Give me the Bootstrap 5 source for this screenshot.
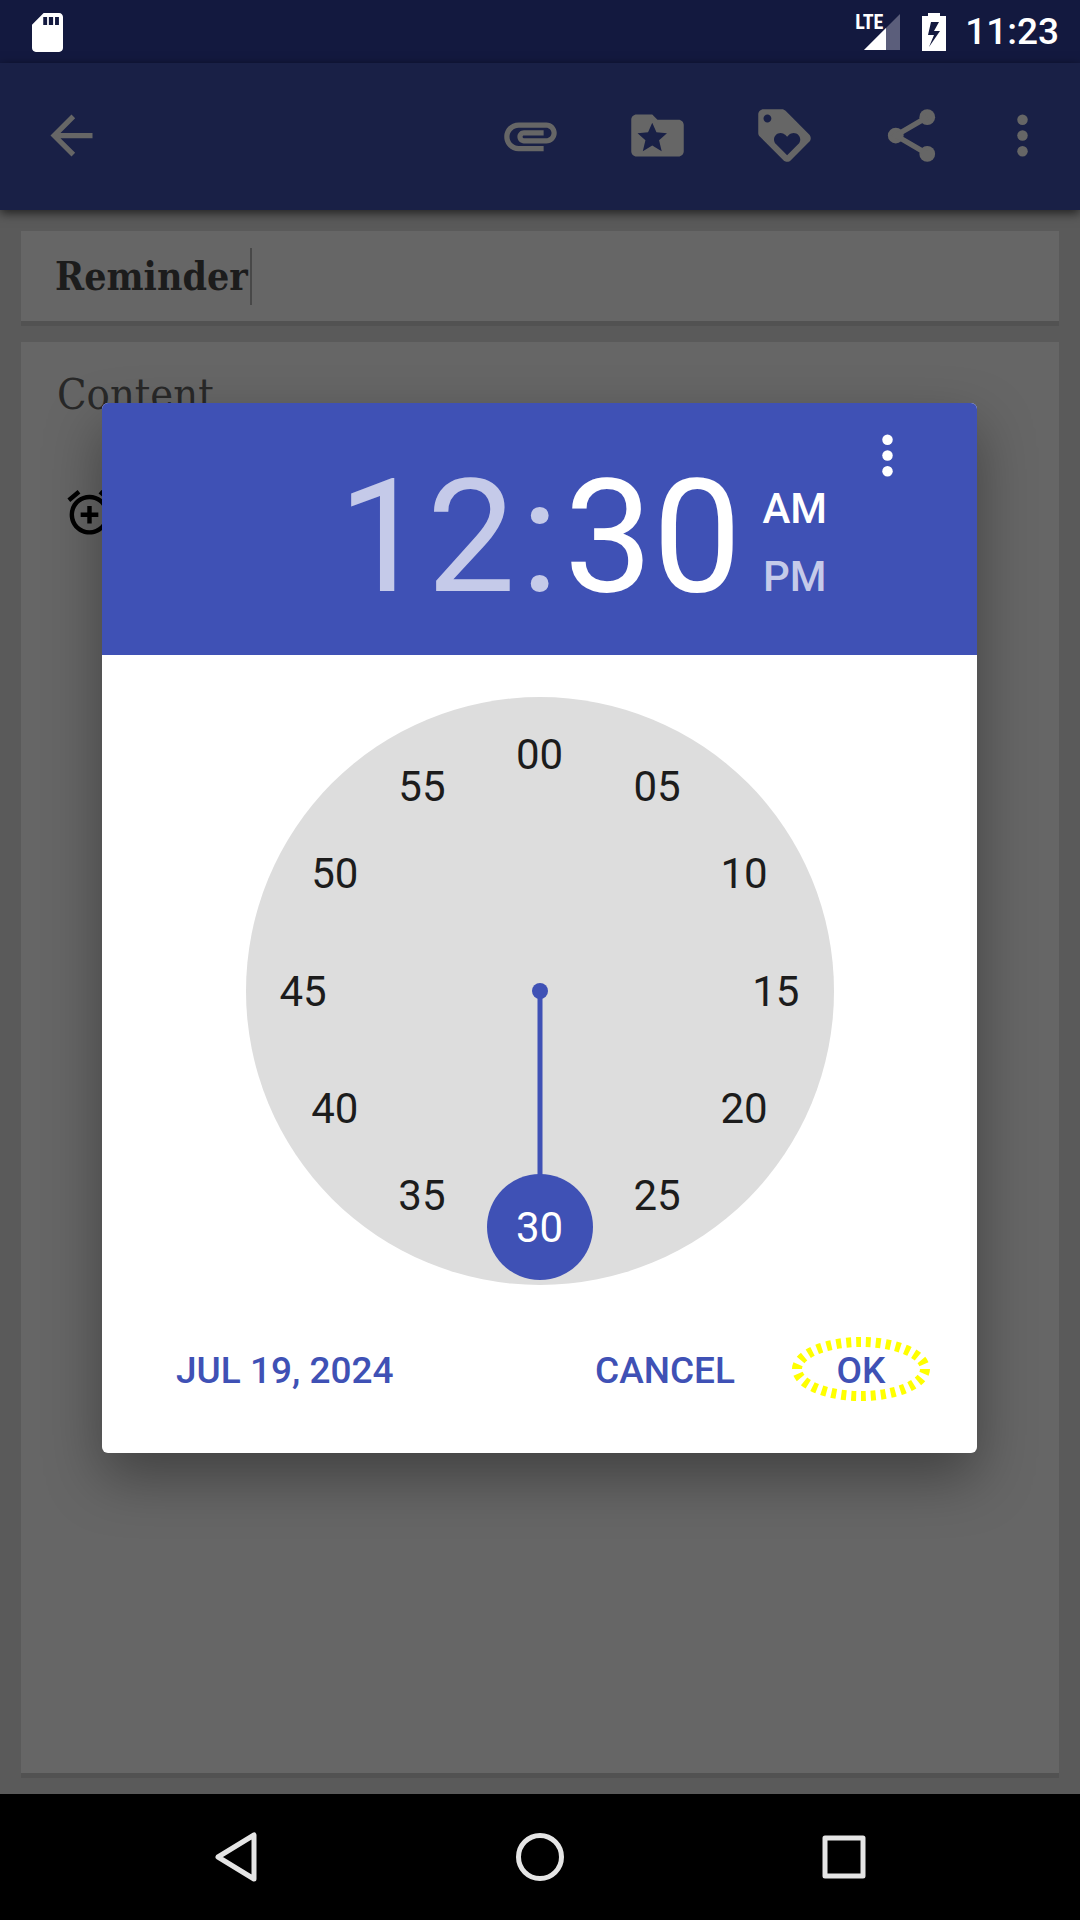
<!DOCTYPE html>
<html lang="en">
<head>
<meta charset="utf-8">
<meta name="viewport" content="width=device-width, initial-scale=1">
<title>Reminder</title>
<link href="https://cdn.jsdelivr.net/npm/bootstrap@5.3.0/dist/css/bootstrap.min.css" rel="stylesheet">
<style>
  body { font-family: Roboto, "Noto Sans", sans-serif; background: #5a5a5a; }
  svg { display: block; }
  .icon-btn { border: 0; background: none; padding: 0; color: inherit; font-weight: inherit; }
  .statusbar { height: 63px; background: #13193f; color: #fff; padding: 1px 21px 0 32px; font-size: 37px; font-weight: 500; line-height: 62px; }
  .network { width: 45px; height: 38px; margin-right: 22px; }
  .network-label { left: 0; top: 0; font: bold 20px/18px "Roboto Condensed", "Liberation Sans Narrow", Roboto, sans-serif; }
  .battery { margin-right: 19px; }
  .appbar { height: 147px; background: #192046; color: #666; padding: 0 26px 2px 40px; box-shadow: 0 3px 10px rgba(0,0,0,.65); z-index: 1; }
  .appbar-actions { gap: 64px; }
  .appbar-more { margin-left: -16px; }
  .editor { padding: 21px 21px 16px; gap: 16px; }
  .sheet { background: #666; border-bottom: 5px solid #525252; font-family: "Roboto Slab", "DejaVu Serif Condensed", "DejaVu Serif", serif; }
  .title-sheet { height: 95px; padding: 0 34px; }
  .title-sheet input, .content-sheet textarea { border: 0; padding: 0; background: none; outline: 0; resize: none; }
  .title-sheet input { width: 195px; font-size: 39px; font-weight: 700; color: #1c1c1c; }
  .caret { width: 2px; height: 57px; background: #484848; }
  .content-sheet { padding: 22px 36px; }
  .content-sheet textarea { height: 60px; line-height: 60px; font-size: 43px; color: #282828; }
  .content-sheet textarea::placeholder { color: #282828; opacity: 1; }
  .alarm-btn { margin: 62px 0 0 6px; color: #000; }
  .picker-layer { z-index: 2; padding: 0 1px 1px 0; }
  .picker { width: 875px; max-width: 82%; border-radius: 6px; background: #fff; box-shadow: 0 24px 56px rgba(0,0,0,.36); color: #3f51b5; }
  .picker-head { height: 252px; background: #3f51b5; color: #c5cae9; border-radius: 6px 6px 0 0; padding: 15px 0 0 236px; }
  .picker-head .active { color: #fff; }
  .clock-text { font-size: 158px; line-height: 188px; }
  .clock-text span { padding: 0 5px; }
  .ampm { font-size: 42px; line-height: 68px; font-weight: 500; margin-left: 21px; padding-top: 12px; }
  .picker-more { top: 21px; right: 58px; color: #fff; }
  .dial { width: 588px; height: 588px; margin: 42px auto 0; background: #ddd; border-radius: 50%; color: #1c1c1c; font-size: 42px; }
  .dial .minute { width: 106px; height: 106px; border-radius: 50%; }
  .dial .minute.active { background: #3f51b5; color: #fff; }
  .hand { width: 5px; height: 236px; background: #3f51b5; }
  .hub { width: 16px; height: 16px; background: #3f51b5; }
  .picker-foot { padding: 37px 32px 37px 53px; gap: 21px; font-size: 37px; font-weight: 500; }
  .picker-foot button { height: 94px; padding: 3px 21px 0; }
  .picker-foot .ok-btn { width: 168px; }
  .navbuttons { height: 126px; background: #000; color: #e5e5e5; gap: 256px; }
</style>
</head>
<body>
<div class="d-flex flex-column min-vh-100">
  <header class="statusbar d-flex align-items-center">
    <svg width="31" height="39" viewBox="4 2 16 20" preserveAspectRatio="none" fill="#fff" aria-hidden="true"><path fill-rule="evenodd" d="M18 2h-8L4 8v12c0 1.100.9 2 2 2h12c1.100 0 2-.9 2-2V4c0-1.100-.9-2-2-2zM9.800 4h2v4.200h-2zM12.700 4h2.200v4.200h-2.200zM15.900 4h2v4.200h-2z"/></svg>
    <div class="network position-relative ms-auto">
      <svg width="45" height="38" viewBox="0 0 45 38" aria-hidden="true"><path d="M45 1v36H9z" fill="#5b5e7b"/><path d="M31 15v22H9z" fill="#fff"/></svg>
      <span class="network-label position-absolute">LTE</span>
    </div>
    <svg class="battery" width="24" height="38" viewBox="0 0 24 38" fill="#fff" aria-hidden="true"><path fill-rule="evenodd" d="M6 0h12v3h6v35H0V3h6zM9 9L6 22h6L7 34 18 18h-6l5-9z"/></svg>
    <span>11:23</span>
  </header>

  <div class="position-relative d-flex flex-column flex-grow-1">
    <nav class="appbar position-relative d-flex align-items-center justify-content-between">
      <button class="icon-btn" aria-label="Back"><svg width="63" height="63" viewBox="0 0 24 24" fill="currentColor"><path d="M20 11H7.800l5.600-5.600L12 4l-8 8 8 8 1.400-1.400L7.800 13H20z"/></svg></button>
      <div class="appbar-actions d-flex">
        <button class="icon-btn" aria-label="Attach"><svg width="63" height="63" viewBox="0 0 24 24" fill="currentColor"><path d="M2 12.500C2 9.460 4.460 7 7.500 7H18c2.210 0 4 1.790 4 4s-1.790 4-4 4H9.500C8.120 15 7 13.880 7 12.500S8.120 10 9.500 10H17v2H9.410c-.55 0-.55 1 0 1H18c1.100 0 2-.9 2-2s-.9-2-2-2H7.500C5.570 9 4 10.570 4 12.500S5.570 16 7.500 16H17v2H7.500C4.460 18 2 15.540 2 12.500z"/></svg></button>
        <button class="icon-btn" aria-label="Category"><svg width="63" height="63" viewBox="0 0 24 24" fill="currentColor"><path fill-rule="evenodd" d="M20 6h-8l-2-2H4c-1.100 0-2 .9-2 2v12c0 1.100.9 2 2 2h16c1.100 0 2-.9 2-2V8c0-1.100-.9-2-2-2zM10 7.100l1.600 3.700 4 .3-3 2.700 1 4.200-3.600-2.200L6.400 18l1-4.200-3-2.700 4-.3z"/></svg></button>
        <button class="icon-btn" aria-label="Tags"><svg width="63" height="63" viewBox="0 0 24 24" fill="currentColor"><path d="M21.410 11.580l-9-9C12.050 2.220 11.550 2 11 2H4c-1.100 0-2 .9-2 2v7c0 .55.22 1.050.59 1.420l9 9c.36.36.86.58 1.410.58.55 0 1.050-.22 1.410-.59l7-7c.37-.36.59-.86.59-1.410 0-.55-.23-1.060-.59-1.420zM5.500 7C4.670 7 4 6.330 4 5.500S4.670 4 5.500 4 7 4.670 7 5.500 6.330 7 5.500 7zm11.770 8.270L13 19.540l-4.270-4.270C8.280 14.810 8 14.190 8 13.500c0-1.380 1.120-2.500 2.500-2.500.69 0 1.320.28 1.770.74l.73.72.73-.73c.45-.45 1.080-.73 1.770-.73 1.380 0 2.500 1.120 2.500 2.500 0 .69-.28 1.320-.73 1.770z"/></svg></button>
        <button class="icon-btn" aria-label="Share"><svg width="63" height="63" viewBox="0 0 24 24" fill="currentColor"><circle cx="18" cy="5" r="3"/><circle cx="6" cy="12" r="3"/><circle cx="18" cy="19" r="3"/><path d="M18 5L6 12l12 7" fill="none" stroke="currentColor" stroke-width="2"/></svg></button>
        <button class="icon-btn appbar-more" aria-label="More options"><svg width="63" height="63" viewBox="0 0 24 24" fill="currentColor"><circle cx="12" cy="6" r="2"/><circle cx="12" cy="12" r="2"/><circle cx="12" cy="18" r="2"/></svg></button>
      </div>
    </nav>

    <main class="editor d-flex flex-column flex-grow-1">
      <div class="sheet title-sheet d-flex align-items-center">
        <input type="text" value="Reminder" aria-label="Title">
        <span class="caret"></span>
      </div>
      <div class="sheet content-sheet flex-grow-1">
        <textarea class="d-block w-100" placeholder="Content" aria-label="Content"></textarea>
        <button class="icon-btn alarm-btn" aria-label="Add reminder"><svg width="53" height="53" viewBox="0 0 24 24" fill="currentColor"><path d="M7.880 3.390L6.600 1.860 2 5.710l1.290 1.530 4.590-3.850zM22 5.720l-4.600-3.860-1.290 1.530 4.600 3.860L22 5.720zM12 4c-4.970 0-9 4.030-9 9s4.020 9 9 9c4.970 0 9-4.030 9-9s-4.030-9-9-9zm0 16c-3.870 0-7-3.130-7-7s3.130-7 7-7 7 3.130 7 7-3.130 7-7 7zm1-11h-2v3H8v2h3v3h2v-3h3v-2h-3V9z"/></svg></button>
      </div>
    </main>

    <div class="picker-layer position-absolute top-0 start-0 w-100 h-100 d-flex align-items-center justify-content-center">
      <section class="picker" role="dialog" aria-label="Pick a time">
        <div class="picker-head position-relative d-flex align-items-center">
          <div class="clock-text d-flex">
            <button class="icon-btn">12</button><span>:</span><button class="icon-btn active">30</button>
          </div>
          <div class="ampm d-flex flex-column">
            <button class="icon-btn active">AM</button>
            <button class="icon-btn">PM</button>
          </div>
          <button class="icon-btn picker-more position-absolute" aria-label="More options"><svg width="63" height="63" viewBox="0 0 24 24" fill="currentColor"><circle cx="12" cy="6" r="2"/><circle cx="12" cy="12" r="2"/><circle cx="12" cy="18" r="2"/></svg></button>
        </div>

        <div class="dial position-relative">
          <div class="hand position-absolute top-50 start-50 translate-middle-x"></div>
          <div class="hub position-absolute top-50 start-50 translate-middle rounded-circle"></div>
          <button class="icon-btn minute position-absolute translate-middle" style="left:50%;top:9.8%">00</button>
          <button class="icon-btn minute position-absolute translate-middle" style="left:70%;top:15.2%">05</button>
          <button class="icon-btn minute position-absolute translate-middle" style="left:84.8%;top:30%">10</button>
          <button class="icon-btn minute position-absolute translate-middle" style="left:90.2%;top:50%">15</button>
          <button class="icon-btn minute position-absolute translate-middle" style="left:84.8%;top:70%">20</button>
          <button class="icon-btn minute position-absolute translate-middle" style="left:70%;top:84.8%">25</button>
          <button class="icon-btn minute active position-absolute translate-middle" style="left:50%;top:90.2%">30</button>
          <button class="icon-btn minute position-absolute translate-middle" style="left:30%;top:84.8%">35</button>
          <button class="icon-btn minute position-absolute translate-middle" style="left:15.2%;top:70%">40</button>
          <button class="icon-btn minute position-absolute translate-middle" style="left:9.8%;top:50%">45</button>
          <button class="icon-btn minute position-absolute translate-middle" style="left:15.2%;top:30%">50</button>
          <button class="icon-btn minute position-absolute translate-middle" style="left:30%;top:15.2%">55</button>
        </div>

        <div class="picker-foot d-flex">
          <button class="icon-btn me-auto">JUL 19, 2024</button>
          <button class="icon-btn">CANCEL</button>
          <button class="icon-btn ok-btn position-relative">OK
            <svg class="position-absolute top-50 start-50 translate-middle" width="140" height="66" viewBox="0 0 140 66" aria-hidden="true"><ellipse cx="70" cy="33" rx="64" ry="27" fill="none" stroke="#ff0" stroke-width="10" pathLength="300" stroke-dasharray="5 5"/></svg>
          </button>
        </div>
      </section>
    </div>
  </div>

  <footer class="navbuttons d-flex align-items-center justify-content-center">
    <button class="icon-btn" aria-label="Back"><svg width="48" height="50" viewBox="0 0 48 50" fill="none" stroke="currentColor" stroke-width="5" stroke-linejoin="round"><path d="M42 3v44L6 25z"/></svg></button>
    <button class="icon-btn" aria-label="Home"><svg width="48" height="50" viewBox="0 0 48 50" fill="none" stroke="currentColor" stroke-width="5"><circle cx="24" cy="25" r="21.500"/></svg></button>
    <button class="icon-btn" aria-label="Recent apps"><svg width="48" height="50" viewBox="0 0 48 50" fill="none" stroke="currentColor" stroke-width="5" stroke-linejoin="round"><path d="M5 6h38v38H5z"/></svg></button>
  </footer>
</div>
<script src="https://cdn.jsdelivr.net/npm/bootstrap@5.3.0/dist/js/bootstrap.bundle.min.js"></script>
</body>
</html>
